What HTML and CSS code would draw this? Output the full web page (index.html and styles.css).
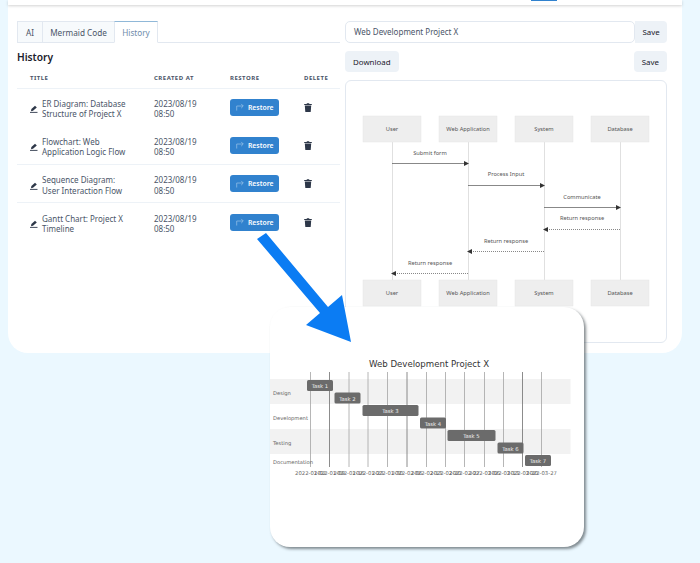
FILE: index.html
```html
<!DOCTYPE html>
<html lang="en">
<head>
    <meta charset="UTF-8">
    <title>History</title>
    <link rel="stylesheet" href="styles.css">
</head>
<body>
    <div id="wrap">
        <div id="card">
            <div class="topbar"><span class="topbtn"></span></div>
            <div class="panels">
                <div class="left">
                    <ul class="tabs">
                        <li class="t1">AI</li>
                        <li class="t2">Mermaid Code</li>
                        <li class="t3 active">History</li>
                    </ul>
                    <h2>History</h2>
                    <table>
                        <thead>
                            <tr><th class="c1">Title</th><th class="c2">Created at</th><th class="c3">Restore</th><th class="c4">Delete</th></tr>
                        </thead>
                        <tbody>
                            <tr>
                                <td class="c1"><div class="name"><svg class="pen" viewBox="0 0 8 8"><path d="M1 6.200 1.400 4 5 .8 6.800 2.400 3 5.800Z"/><path d="M0 7.400H7.500" stroke="#2d3748" stroke-width=".9"/></svg><span>ER Diagram: Database Structure of Project X</span></div></td>
                                <td class="c2">2023/08/19<br>08:50</td>
                                <td class="c3"><button class="restore"><svg class="share" viewBox="0 0 9 9"><path d="M.8 8.500V3.400H8M5.800 1 8.200 3.400 5.800 5.800"/></svg>Restore</button></td>
                                <td class="c4"><svg class="trash" viewBox="0 0 8 9"><path d="M.2 1.100H2.500L3 .2H5L5.500 1.100H7.800V2.100H.2Z"/><path d="M.8 2.600H7.200L6.700 9H1.300Z"/></svg></td>
                            </tr>
                            <tr class="noline">
                                <td class="c1"><div class="name"><svg class="pen" viewBox="0 0 8 8"><path d="M1 6.200 1.400 4 5 .8 6.800 2.400 3 5.800Z"/><path d="M0 7.400H7.500" stroke="#2d3748" stroke-width=".9"/></svg><span>Flowchart: Web Application Logic Flow</span></div></td>
                                <td class="c2">2023/08/19<br>08:50</td>
                                <td class="c3"><button class="restore"><svg class="share" viewBox="0 0 9 9"><path d="M.8 8.500V3.400H8M5.800 1 8.200 3.400 5.800 5.800"/></svg>Restore</button></td>
                                <td class="c4"><svg class="trash" viewBox="0 0 8 9"><path d="M.2 1.100H2.500L3 .2H5L5.500 1.100H7.800V2.100H.2Z"/><path d="M.8 2.600H7.200L6.700 9H1.300Z"/></svg></td>
                            </tr>
                            <tr>
                                <td class="c1"><div class="name"><svg class="pen" viewBox="0 0 8 8"><path d="M1 6.200 1.400 4 5 .8 6.800 2.400 3 5.800Z"/><path d="M0 7.400H7.500" stroke="#2d3748" stroke-width=".9"/></svg><span>Sequence Diagram: User Interaction Flow</span></div></td>
                                <td class="c2">2023/08/19<br>08:50</td>
                                <td class="c3"><button class="restore"><svg class="share" viewBox="0 0 9 9"><path d="M.8 8.500V3.400H8M5.800 1 8.200 3.400 5.800 5.800"/></svg>Restore</button></td>
                                <td class="c4"><svg class="trash" viewBox="0 0 8 9"><path d="M.2 1.100H2.500L3 .2H5L5.500 1.100H7.800V2.100H.2Z"/><path d="M.8 2.600H7.200L6.700 9H1.300Z"/></svg></td>
                            </tr>
                            <tr>
                                <td class="c1"><div class="name"><svg class="pen" viewBox="0 0 8 8"><path d="M1 6.200 1.400 4 5 .8 6.800 2.400 3 5.800Z"/><path d="M0 7.400H7.500" stroke="#2d3748" stroke-width=".9"/></svg><span>Gantt Chart: Project X Timeline</span></div></td>
                                <td class="c2">2023/08/19<br>08:50</td>
                                <td class="c3"><button class="restore"><svg class="share" viewBox="0 0 9 9"><path d="M.8 8.500V3.400H8M5.800 1 8.200 3.400 5.800 5.800"/></svg>Restore</button></td>
                                <td class="c4"><svg class="trash" viewBox="0 0 8 9"><path d="M.2 1.100H2.500L3 .2H5L5.500 1.100H7.800V2.100H.2Z"/><path d="M.8 2.600H7.200L6.700 9H1.300Z"/></svg></td>
                            </tr>
                        </tbody>
                    </table>
                </div>
                <div class="right">
                    <div class="namebar">
                        <div class="nameinput">Web Development Project X</div>
                        <button class="gray savea">Save</button>
                    </div>
                    <div class="actions">
                        <button class="gray">Download</button>
                        <button class="gray">Save</button>
                    </div>
                    <div class="diagram">
                        <svg class="seq" viewBox="1 1 320 261">
                            <g class="life">
                                <path d="M47.500 61V201M123.500 61V201M199.500 61V201M275.500 61V201"/>
                            </g>
                            <g class="actor">
                                <rect x="18" y="36" width="58" height="26"/><rect x="94" y="36" width="58" height="26"/><rect x="170" y="36" width="58" height="26"/><rect x="246" y="36" width="58" height="26"/>
                                <rect x="18" y="200" width="58" height="26"/><rect x="94" y="200" width="58" height="26"/><rect x="170" y="200" width="58" height="26"/><rect x="246" y="200" width="58" height="26"/>
                            </g>
                            <g class="label">
                                <text x="47" y="51">User</text><text x="123" y="51">Web Application</text><text x="199" y="51">System</text><text x="275" y="51">Database</text>
                                <text x="47" y="215">User</text><text x="123" y="215">Web Application</text><text x="199" y="215">System</text><text x="275" y="215">Database</text>
                                <text x="85" y="75">Submit form</text>
                                <text x="161" y="96">Process Input</text>
                                <text x="237" y="119">Communicate</text>
                                <text x="237" y="140">Return response</text>
                                <text x="161" y="163">Return response</text>
                                <text x="85" y="185">Return response</text>
                            </g>
                            <g class="msg">
                                <path d="M47 83.500H122"/><path d="M123 105.500H198"/><path d="M199 127.500H274"/>
                                <path class="dash" d="M275 149.500H200"/><path class="dash" d="M199 171.500H124"/><path class="dash" d="M123 193.500H48"/>
                            </g>
                            <g class="head">
                                <path d="M124 83.500 119 81V86Z"/><path d="M200 105.500 195 103V108Z"/><path d="M276 127.500 271 125V130Z"/>
                                <path d="M198 149.500 203 147V152Z"/><path d="M122 171.500 127 169V174Z"/><path d="M46 193.500 51 191V196Z"/>
                            </g>
                        </svg>
                    </div>
                </div>
            </div>
        </div>

        <div id="gantt">
            <svg class="chart" viewBox="0 0 314 240">
                <text class="title" x="159" y="60">Web Development Project X</text>
                <rect class="band" x="0" y="72" width="300.500" height="25"/>
                <rect class="band" x="0" y="122" width="300.500" height="25"/>
                <g class="grid">
                    <path d="M40.500 65V160M79 65V160M98 65V160M117.500 65V160M156.500 65V160M175.500 65V160M194.500 65V160M214.500 65V160M233.500 65V160M271.500 65V160"/>
                    <path class="dark" d="M59.500 65V160M137 65V160M252.500 65V160"/>
                </g>
                <g class="bars">
                    <rect x="37" y="73" width="26" height="11"/><rect x="64.500" y="85.500" width="26" height="11"/><rect x="92.500" y="98" width="56" height="11"/><rect x="150" y="110.500" width="26" height="11"/><rect x="177.500" y="123" width="48" height="11"/><rect x="227.500" y="135.500" width="26" height="11"/><rect x="255" y="148" width="26" height="11"/>
                </g>
                <g class="tasks">
                    <text x="50" y="81">Task 1</text><text x="77.500" y="93.500">Task 2</text><text x="120.500" y="106">Task 3</text><text x="163" y="118.500">Task 4</text><text x="201.500" y="131">Task 5</text><text x="240.500" y="143.500">Task 6</text><text x="268" y="156">Task 7</text>
                </g>
                <g class="rows">
                    <text x="3" y="88">Design</text><text x="3" y="113">Development</text><text x="3" y="138">Testing</text><text x="3" y="157">Documentation</text>
                </g>
                <g class="axis">
                    <text x="40.500" y="168">2022-01-02</text><text x="59.500" y="168">2022-01-09</text><text x="79" y="168">2022-01-16</text><text x="98" y="168">2022-01-23</text><text x="117.500" y="168">2022-01-30</text><text x="137" y="168">2022-02-06</text><text x="156.500" y="168">2022-02-13</text><text x="175.500" y="168">2022-02-20</text><text x="194.500" y="168">2022-02-27</text><text x="214.500" y="168">2022-03-06</text><text x="233.500" y="168">2022-03-13</text><text x="252.500" y="168">2022-03-20</text><text x="271.500" y="168">2022-03-27</text>
                </g>
            </svg>
        </div>

        <svg id="arrow" viewBox="0 0 100 115"><path d="M2 9 11 3 73 77 87 65 96 112 51 95 65 83Z"/></svg>
    </div>
</body>
</html>
```

FILE: styles.css
```css
*{margin: 0;padding: 0;box-sizing: border-box;}
ul,li{list-style: none;}
html,body{height: 100%;overflow: hidden;}
body{background: #ebf8ff;font-family: "Noto Sans","Liberation Sans",sans-serif;font-size: 8px;color: #2d3748;}
button{font-family: inherit;border: 0;}
#wrap{width: 700px;height: 563px;position: relative;}

#card{width: 674px;height: 353px;margin-left: 8px;background: #fff;border-radius: 0 0 20px 20px;}
.topbar{height: 5px;background: #fff;box-shadow: 0 1px 3px rgba(0,0,0,.18);padding-left: 523px;}
.topbtn{display: block;width: 26px;height: 1px;background: #3182ce;}
.panels{display: flex;padding: 16px 15px 0 9px;gap: 5px;}
.left{width: 323px;}
.right{width: 322px;}

.tabs{display: flex;height: 22px;border-bottom: 1px solid #e2e8f0;}
.tabs li{height: 22px;line-height: 21px;text-align: center;background: #f7fafc;border: 1px solid #e2e8f0;border-right: 0;color: #4a5568;font-size: 8.200px;}
.tabs .t1{width: 25px;}
.tabs .t2{width: 72px;}
.tabs .t3{width: 44px;}
.tabs li.active{background: #fff;border-top-color: #90b8d8;border-right: 1px solid #e2e8f0;border-bottom-color: #fff;color: #6f8cab;}
h2{font-size: 10.200px;font-weight: 600;color: #1a202c;line-height: 17px;margin-top: 6px;}

table{width: 323px;margin-top: 2px;border-collapse: collapse;table-layout: fixed;}
th{height: 20px;font-size: 6px;font-weight: 700;letter-spacing: .5px;text-transform: uppercase;text-align: left;color: #4a5568;}
td{height: 38.300px;border-top: 1px solid #edf2f7;font-size: 8px;line-height: 10.500px;color: #4a5568;}
td.c1,td.c2{padding-top: 4px;}
tr.noline td{border-top-color: #fff;}
.c1{width: 137px;padding-left: 13px;}
.c2{width: 76px;}
.c3{width: 74px;}
.c4{width: 36px;}
.name{display: flex;align-items: center;gap: 4px;}
.name span{width: 90px;}
.pen{width: 8px;height: 8px;flex: none;fill: #2d3748;}
.restore{display: flex;align-items: center;gap: 4px;width: 49px;height: 17px;padding-left: 6px;border-radius: 3px;background: #3182ce;color: #fff;font-size: 6.800px;font-weight: 600;}
.share{width: 8px;height: 8px;fill: none;stroke: #a9cdec;stroke-width: .7;}
.trash{display: block;width: 8px;height: 9px;fill: #2d3748;}

.namebar{display: flex;height: 22px;}
.nameinput{width: 290px;height: 22px;line-height: 20px;padding-left: 8px;border: 1px solid #e2e8f0;border-radius: 5px;font-size: 8px;color: #4a5568;}
.gray{height: 21px;padding: 0 8px;background: #edf2f7;border-radius: 4px;color: #1a202c;font-size: 7.900px;font-weight: 400;}
.savea{width: 32px;padding: 0;height: 22px;border-radius: 0 4px 4px 0;}
.actions{display: flex;justify-content: space-between;margin-top: 8px;}
.diagram{height: 263px;margin-top: 8px;border: 1px solid #e2e8f0;border-radius: 6px;}
.seq{display: block;width: 320px;height: 261px;}
.life path{fill: none;stroke: #e0e0e0;stroke-width: 1;}
.actor rect{fill: #eee;stroke: #e6e6e6;stroke-width: .5;}
.label text{font-size: 5.700px;fill: #555;text-anchor: middle;}
.msg path{fill: none;stroke: #555;stroke-width: .7;}
.msg path.dash{stroke-dasharray: 1 1;}
.head path{fill: #333;}

#gantt{position: absolute;left: 270px;top: 307px;width: 314px;height: 240px;background: #fff;border-radius: 20px;box-shadow: 2px 2px 3px rgba(70,80,85,.65);}
.chart{display: block;width: 314px;height: 240px;}
.chart text{font-family: "DejaVu Sans",sans-serif;}
.chart .title{font-size: 8.600px;fill: #333;text-anchor: middle;}
.band{fill: #f2f2f2;}
.grid path{fill: none;stroke: #a3a3a3;stroke-width: .8;}
.grid path.dark{stroke: #6e6e6e;}
.bars rect{fill: #6b6b6b;rx: 1.500px;}
.tasks text{font-size: 5.300px;fill: #eee;text-anchor: middle;}
.rows text{font-size: 5.200px;fill: #666;}
.axis text{font-size: 5.300px;fill: #666;text-anchor: middle;}

#arrow{position: absolute;left: 255px;top: 230px;width: 100px;height: 115px;}
#arrow path{fill: #0b7cf3;}
```
